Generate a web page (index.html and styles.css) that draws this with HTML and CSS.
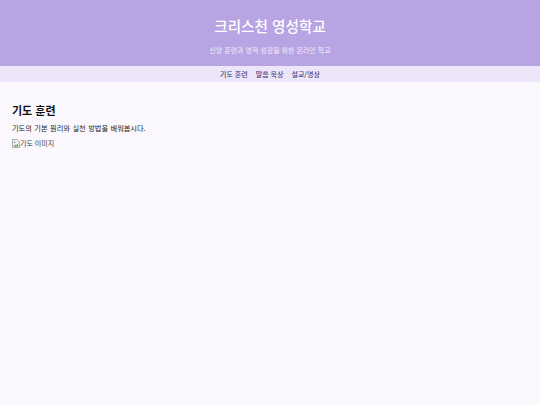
FILE: index.html
```html
<!DOCTYPE html>
<html lang="ko">
<head>
<meta charset="utf-8">
<title>크리스천 영성학교</title>
<link rel="stylesheet" href="styles.css">
</head>
<body>
<header class="site-header">
  <h1 class="site-title">크리스천 영성학교</h1>
  <p class="site-sub">신앙 훈련과 영적 성장을 위한 온라인 학교</p>
</header>
<nav class="site-nav">
  <a href="#" class="nav-link">기도 훈련</a>
  <a href="#" class="nav-link">말씀 묵상</a>
  <a href="#" class="nav-link">설교/영상</a>
</nav>
<main class="content">
  <h2 class="section-title">기도 훈련</h2>
  <p class="section-text">기도의 기본 원리와 실천 방법을 배워봅시다.</p>
  <div class="img-alt">
    <svg class="broken" width="8" height="9" viewBox="0 0 8 9">
      <path d="M0.5 0.5H5L7.5 3V8.5H0.5Z" fill="#f2f2f2" stroke="#9a9a9a" stroke-width="0.8"/>
      <path d="M1.5 7.5L3 5.5L4.2 6.6L5.4 4.8L6.6 7.5Z" fill="#5a9a4a"/>
      <circle cx="2.6" cy="3.2" r="0.8" fill="#4a8ad0"/>
    </svg><span>기도 이미지</span>
  </div>
</main>
</body>
</html>
```
FILE: styles.css
```css
html, body {
  margin: 0;
  padding: 0;
}
body {
  background: #faf8fd;
  font-family: "Noto Sans CJK KR", "Noto Sans", sans-serif;
  color: #222;
  min-height: 405px;
}
.site-header {
  background: #b8a4e3;
  height: 66px;
  box-sizing: border-box;
  padding-top: 15px;
  text-align: center;
  color: #fff;
}
.site-title {
  margin: 0;
  font-size: 14.6px;
  line-height: 22px;
  font-weight: 500;
}
.site-sub {
  margin: 8px 0 0;
  font-size: 7px;
  line-height: 10px;
  color: #f1ecfb;
}
.site-nav {
  background: #ede6fa;
  height: 16px;
  display: flex;
  justify-content: center;
  align-items: center;
  gap: 8px;
}
.nav-link {
  font-size: 7px;
  line-height: 10px;
  color: #4b3c7c;
  text-decoration: none;
  font-weight: 500;
}
.content {
  padding: 20px 12px;
}
.section-title {
  margin: 0;
  font-size: 11px;
  line-height: 16px;
  font-weight: 700;
  color: #111;
}
.section-text {
  margin: 5px 0 0;
  font-size: 7.2px;
  line-height: 10px;
  word-spacing: 0.5px;
  color: #222;
}
.img-alt {
  margin-top: 5px;
  display: flex;
  align-items: center;
  font-size: 7px;
  line-height: 10px;
  color: #444;
}
.broken {
  display: block;
}
```
